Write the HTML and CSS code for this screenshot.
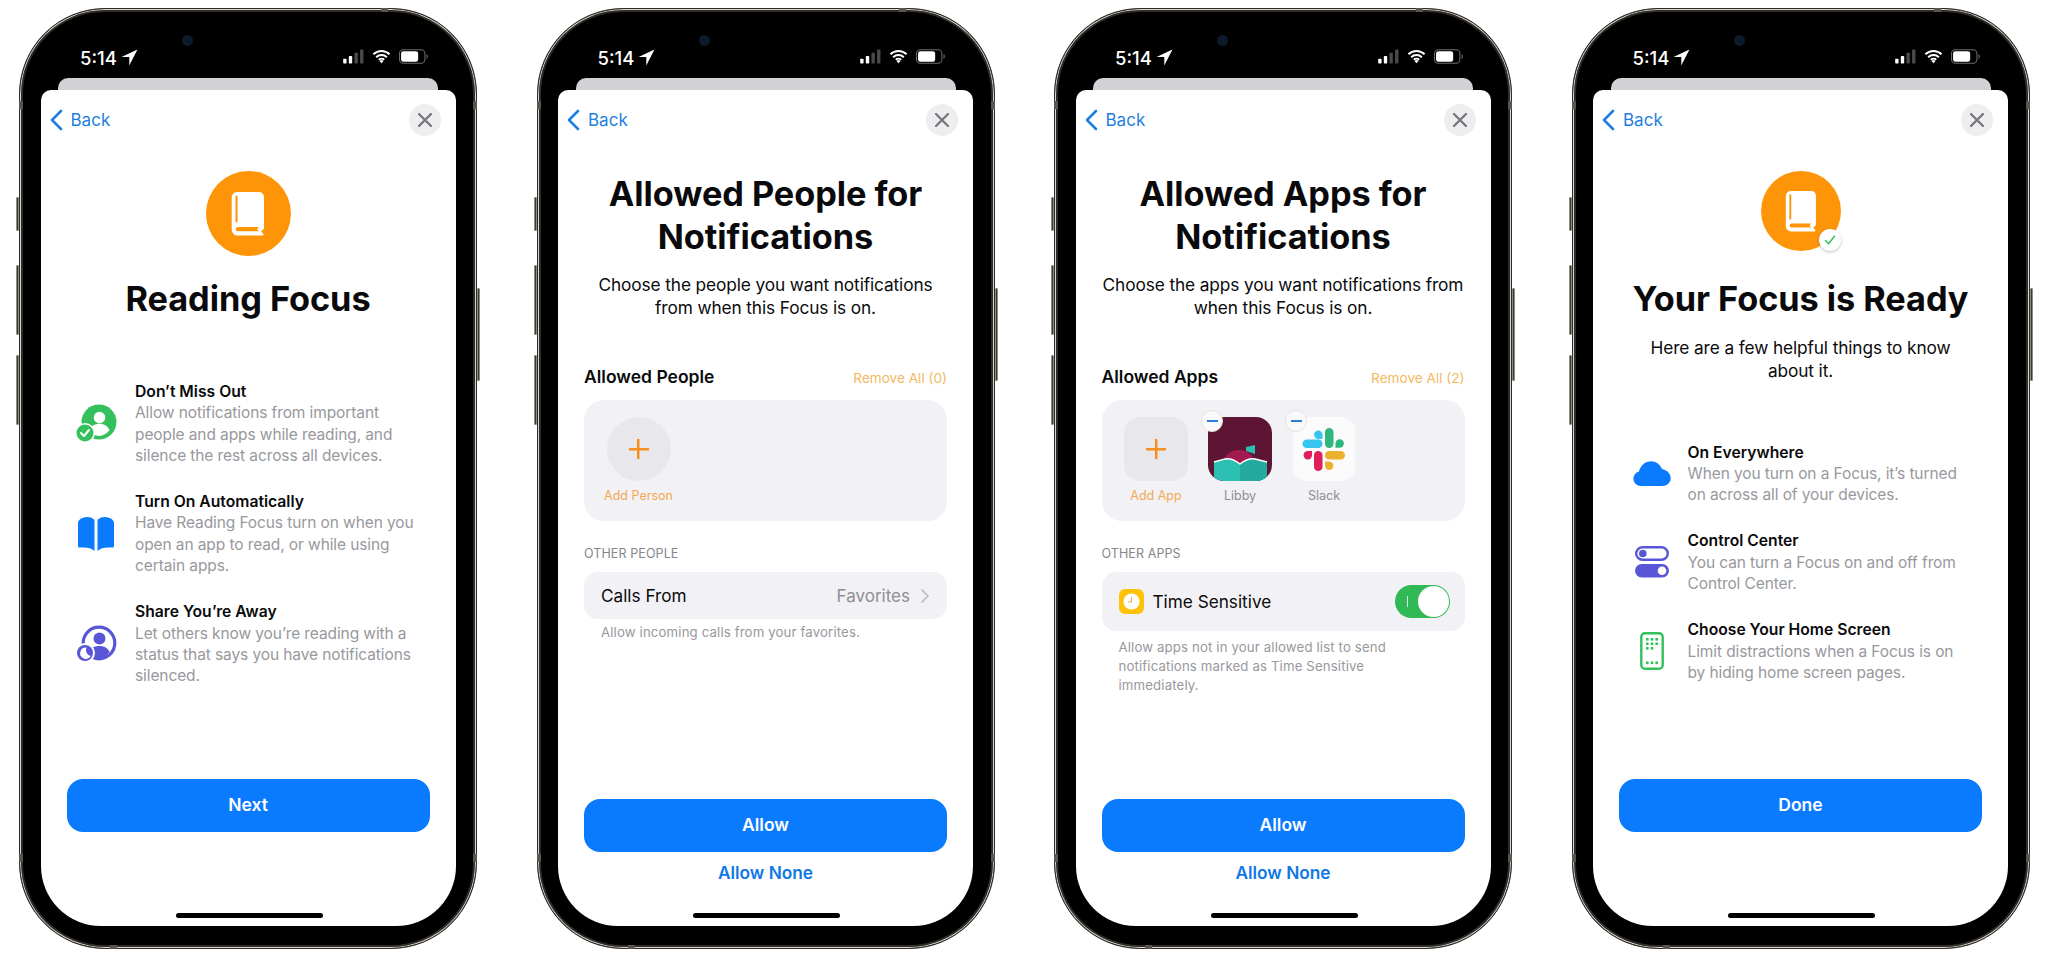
FILE: index.html
```html
<!DOCTYPE html>
<html lang="en">
<head>
<meta charset="utf-8">
<title>Focus setup</title>
<link rel="stylesheet" href="styles.css">
</head>
<body>
<svg class="sprites" width="0" height="0" aria-hidden="true">
  <symbol id="arrow" viewBox="0 0 16 16"><path d="M15.500.5.500 7.500h7.300v8z" fill="#fff"/></symbol>
  <symbol id="signal" viewBox="0 0 22 16">
    <rect x="0" y="10.500" width="3.600" height="5" rx=".8" fill="#fff"/>
    <rect x="6" y="7.500" width="3.600" height="8" rx=".8" fill="#fff"/>
    <rect x="12" y="4" width="3.600" height="11.500" rx=".8" fill="#4a4a4a"/>
    <rect x="18" y="0.500" width="3.600" height="15" rx=".8" fill="#4a4a4a"/>
  </symbol>
  <symbol id="wifi" viewBox="0 0 20 15">
    <path d="M1.500 5.200a12.200 12.200 0 0 1 17 0M4.400 8.200a8 8 0 0 1 11.200 0M7.200 11a4 4 0 0 1 5.600 0" fill="none" stroke="#fff" stroke-width="2.100"/>
    <path d="M10 14.600 7.900 12.300a3 3 0 0 1 4.200 0z" fill="#fff"/>
  </symbol>
  <symbol id="battery" viewBox="0 0 28 14">
    <rect x=".5" y=".5" width="24.500" height="13" rx="3.600" fill="none" stroke="#6b6b6b"/>
    <rect x="2" y="2" width="16.500" height="10" rx="2.200" fill="#fff"/>
    <path d="M26.600 4.700c.9.4 1.200 1.300 1.200 2.300s-.3 1.900-1.200 2.300z" fill="#6b6b6b"/>
  </symbol>
  <symbol id="back" viewBox="0 0 14 22"><path d="M12 2 3 11l9 9" fill="none" stroke="#1f7fe0" stroke-width="2.600" stroke-linecap="round" stroke-linejoin="round"/></symbol>
  <symbol id="close" viewBox="0 0 14 14"><path d="M1 1l12 12M13 1 1 13" fill="none" stroke="#77777b" stroke-width="2.300" stroke-linecap="round"/></symbol>
  <symbol id="book" viewBox="0 0 34 44">
    <path d="M6 0h22a5 5 0 0 1 5 5v30.500a3 3 0 0 1-1 2.200l-2 1.800 2.200 2.200c.6.6.2 1.800-.7 1.800H6.500A5.800 5.800 0 0 1 .7 38V5.300A5.300 5.300 0 0 1 6 0z" fill="#fff"/>
    <rect x="4.500" y="3.500" width="2" height="27" rx="1" fill="#fe9509"/>
    <path d="M6.500 35H28l-1.400 1.500c-.3.4-.3 1 0 1.400l1.200 1.400H6.500a2.200 2.200 0 0 1 0-4.300z" fill="#fe9509"/>
  </symbol>
  <symbol id="i-person-check" viewBox="0 0 44 44">
    <circle cx="25" cy="20" r="17.500" fill="#34c05c"/>
    <circle cx="25.500" cy="15.500" r="5.800" fill="#fff"/>
    <path d="M15 29c1.500-5 6-7.200 10.500-7.200s8.500 2.200 10 6.500c-2.600 3.500-6.300 5.600-10.500 5.600-3.700 0-7.300-1.800-10-4.900z" fill="#fff"/>
    <circle cx="11" cy="31" r="10" fill="#fff"/>
    <circle cx="11" cy="31" r="8.500" fill="#34c05c"/>
    <path d="M7 31l3 3 5-6" fill="none" stroke="#fff" stroke-width="2" stroke-linecap="round" stroke-linejoin="round"/>
  </symbol>
  <symbol id="i-open-book" viewBox="0 0 44 36">
    <path d="M8.500 2C13 0 18 1 20.500 4v31c-3-3-8-4-14-3.400-1.800.3-2.500-.5-2.500-2V7c0-2.400 2-4 4.500-5z" fill="#0a7aff"/>
    <path d="M35.500 2C31 0 26 1 23.500 4v31c3-3 8-4 14-3.400 1.800.3 2.500-.5 2.500-2V7c0-2.400-2-4-4.500-5z" fill="#0a7aff"/>
  </symbol>
  <symbol id="i-share" viewBox="0 0 44 44">
    <circle cx="25" cy="21" r="15.800" fill="none" stroke="#5856d6" stroke-width="3.200"/>
    <circle cx="25.500" cy="16.500" r="6" fill="#5856d6"/>
    <path d="M14 32c1.500-5.500 6-8 11.500-8 4.500 0 8.500 2 10 6-2.600 3.800-6.300 6-10.500 6-4 0-8-1.500-11-4z" fill="#5856d6"/>
    <circle cx="11" cy="31" r="10" fill="#fff"/>
    <circle cx="11" cy="31" r="8" fill="#5856d6"/>
    <path d="M12.500 25.500a5.700 5.700 0 1 0 4.300 8.500 6 6 0 0 1-4.300-8.500z" fill="#fff"/>
  </symbol>
  <symbol id="i-cloud" viewBox="0 0 38 25">
    <path d="M7.500 25A7.300 7.300 0 0 1 6 10.600C7.600 4.300 12.500.3 18 .3c5 0 9 3 11 7.700 4.800.8 8.700 4.800 8.700 9 0 4.600-3.700 8-8.500 8z" fill="#0a7aff"/>
  </symbol>
  <symbol id="i-switch" viewBox="0 0 34 32">
    <rect x="1.200" y="1.200" width="31.600" height="12.600" rx="6.300" fill="none" stroke="#5856d6" stroke-width="2.400"/>
    <circle cx="7.800" cy="7.500" r="3.800" fill="#5856d6"/>
    <rect x="0" y="18" width="34" height="13.500" rx="6.700" fill="#5856d6"/>
    <circle cx="27" cy="24.700" r="4.300" fill="#fff"/>
  </symbol>
  <symbol id="i-phone" viewBox="0 0 24 38">
    <rect x="1.300" y="1.300" width="21.400" height="35.400" rx="3.500" fill="none" stroke="#34c05c" stroke-width="2.400"/>
    <g fill="#34c05c">
      <rect x="6" y="6" width="2.600" height="2.600"/><rect x="10.700" y="6" width="2.600" height="2.600"/><rect x="15.400" y="6" width="2.600" height="2.600"/>
      <rect x="6" y="10.500" width="2.600" height="2.600"/><rect x="10.700" y="10.500" width="2.600" height="2.600"/><rect x="15.400" y="10.500" width="2.600" height="2.600"/>
      <rect x="6" y="15" width="2.600" height="2.600"/><rect x="10.700" y="15" width="2.600" height="2.600"/>
      <rect x="6" y="29.500" width="2.600" height="2.600"/><rect x="10.700" y="29.500" width="2.600" height="2.600"/><rect x="15.400" y="29.500" width="2.600" height="2.600"/>
    </g>
  </symbol>
</svg>

<main class="stage">

  <!-- Phone 1 -->
  <section class="phone">
    <i class="side side-mute"></i><i class="side side-up"></i><i class="side side-down"></i><i class="side side-power"></i>
    <div class="screen">
      <i class="speaker"></i><i class="camera"></i>
      <header class="status">
        <span class="time">5:14</span><svg class="s-arrow"><use href="#arrow"/></svg>
        <span class="status-right"><svg class="s-signal"><use href="#signal"/></svg><svg class="s-wifi"><use href="#wifi"/></svg><svg class="s-battery"><use href="#battery"/></svg></span>
      </header>
      <div class="sheet-back"></div>
      <div class="card">
        <nav class="nav"><a class="back"><svg class="back-icon"><use href="#back"/></svg>Back</a><span class="close"><svg class="close-icon"><use href="#close"/></svg></span></nav>
        <div class="hero"><svg class="hero-book"><use href="#book"/></svg></div>
        <h1 class="title title-hero">Reading Focus</h1>
        <ul class="features features-first">
          <li class="feature"><svg class="f-icon"><use href="#i-person-check"/></svg><div><h3>Don’t Miss Out</h3><p>Allow notifications from important people and apps while reading, and silence the rest across all devices.</p></div></li>
          <li class="feature"><svg class="f-icon f-icon-book"><use href="#i-open-book"/></svg><div><h3>Turn On Automatically</h3><p>Have Reading Focus turn on when you open an app to read, or while using certain apps.</p></div></li>
          <li class="feature"><svg class="f-icon"><use href="#i-share"/></svg><div><h3>Share You’re Away</h3><p>Let others know you’re reading with a status that says you have notifications silenced.</p></div></li>
        </ul>
        <footer class="foot foot-single"><button class="primary">Next</button></footer>
      </div>
      <i class="home"></i>
    </div>
  </section>

  <!-- Phone 2 -->
  <section class="phone">
    <i class="side side-mute"></i><i class="side side-up"></i><i class="side side-down"></i><i class="side side-power"></i>
    <div class="screen">
      <i class="speaker"></i><i class="camera"></i>
      <header class="status">
        <span class="time">5:14</span><svg class="s-arrow"><use href="#arrow"/></svg>
        <span class="status-right"><svg class="s-signal"><use href="#signal"/></svg><svg class="s-wifi"><use href="#wifi"/></svg><svg class="s-battery"><use href="#battery"/></svg></span>
      </header>
      <div class="sheet-back"></div>
      <div class="card">
        <nav class="nav"><a class="back"><svg class="back-icon"><use href="#back"/></svg>Back</a><span class="close"><svg class="close-icon"><use href="#close"/></svg></span></nav>
        <h1 class="title title-top">Allowed People for Notifications</h1>
        <p class="lead lead-top">Choose the people you want notifications from when this Focus is on.</p>
        <div class="sec-head"><h2>Allowed People</h2><span class="remove">Remove All (0)</span></div>
        <div class="panel">
          <div class="tile-item"><span class="tile tile-round"><i class="plus"></i></span><span class="tile-label tile-label-add">Add Person</span></div>
        </div>
        <h4 class="caption">OTHER PEOPLE</h4>
        <div class="row row-calls"><span class="row-name">Calls From</span><span class="row-val">Favorites</span><svg class="row-chev" viewBox="0 0 10 16"><path d="M2 2l6 6-6 6" fill="none" stroke="#c4c4c8" stroke-width="1.800" stroke-linecap="round" stroke-linejoin="round"/></svg></div>
        <p class="note note-calls">Allow incoming calls from your favorites.</p>
        <footer class="foot foot-double"><button class="primary">Allow</button><a class="secondary">Allow None</a></footer>
      </div>
      <i class="home"></i>
    </div>
  </section>

  <!-- Phone 3 -->
  <section class="phone">
    <i class="side side-mute"></i><i class="side side-up"></i><i class="side side-down"></i><i class="side side-power"></i>
    <div class="screen">
      <i class="speaker"></i><i class="camera"></i>
      <header class="status">
        <span class="time">5:14</span><svg class="s-arrow"><use href="#arrow"/></svg>
        <span class="status-right"><svg class="s-signal"><use href="#signal"/></svg><svg class="s-wifi"><use href="#wifi"/></svg><svg class="s-battery"><use href="#battery"/></svg></span>
      </header>
      <div class="sheet-back"></div>
      <div class="card">
        <nav class="nav"><a class="back"><svg class="back-icon"><use href="#back"/></svg>Back</a><span class="close"><svg class="close-icon"><use href="#close"/></svg></span></nav>
        <h1 class="title title-top">Allowed Apps for Notifications</h1>
        <p class="lead lead-top">Choose the apps you want notifications from when this Focus is on.</p>
        <div class="sec-head"><h2>Allowed Apps</h2><span class="remove">Remove All (2)</span></div>
        <div class="panel">
          <div class="tile-item"><span class="tile tile-square"><i class="plus"></i></span><span class="tile-label tile-label-add">Add App</span></div>
          <div class="tile-item">
            <span class="tile tile-app">
              <svg class="app-art" viewBox="0 0 64 64">
                <rect width="64" height="64" fill="#5e1534"/>
                <path d="M15 48c0-9 7-15 16-15s16 6 16 15z" fill="#a31a50"/>
                <path d="M38 30l9-2v9l-9-3z" fill="#2fbfb2"/>
                <path d="M6 45 17 42c5-1 11 2 15 5 4-3 10-6 15-5l12 3v19H6z" fill="#2cc0b3"/>
                <path d="M32 47.500V64h27V45l-12-3c-5-1-11 2-15 5z" fill="#23a99e"/>
                <path d="M6 45 17 42c5-1 11 2 15 5 4-3 10-6 15-5l12 3" fill="none" stroke="#fff" stroke-width="1.500"/>
              </svg>
            </span>
            <i class="minus"></i>
            <span class="tile-label">Libby</span>
          </div>
          <div class="tile-item">
            <span class="tile tile-app tile-slack">
              <svg class="app-art" viewBox="0 0 62 64">
                <rect width="62" height="64" fill="#fbfbfc"/>
                <rect x="9.500" y="22.500" width="20" height="8.500" rx="4.250" fill="#36c5f0"/>
                <path d="M25.500 22.500a4.200 4.200 0 1 1 4.200-4.200v4.200z" fill="#36c5f0" transform="translate(-.2 -.5)"/>
                <rect x="32" y="11" width="8.500" height="20" rx="4.250" fill="#2eb67d"/>
                <path d="M42.500 26.500a4.200 4.200 0 1 1 4.200 4.200h-4.200z" fill="#2eb67d"/>
                <rect x="32" y="34" width="20" height="8.500" rx="4.250" fill="#ecb22e"/>
                <path d="M36.200 44.500a4.200 4.200 0 1 1-4.200 4.200v-4.200z" fill="#ecb22e"/>
                <rect x="21" y="34" width="8.500" height="20" rx="4.250" fill="#e01e5a"/>
                <path d="M19 38.200a4.200 4.200 0 1 1-4.200-4.200h4.200z" fill="#e01e5a"/>
              </svg>
            </span>
            <i class="minus"></i>
            <span class="tile-label">Slack</span>
          </div>
        </div>
        <h4 class="caption">OTHER APPS</h4>
        <div class="row row-time">
          <span class="ts-icon"><svg viewBox="0 0 18 18"><circle cx="9" cy="9" r="8.500" fill="#fff"/><path d="M9 4.500V9.500H5.500" fill="none" stroke="#e8b010" stroke-width="1"/></svg></span>
          <span class="row-name">Time Sensitive</span>
          <span class="toggle"><i class="toggle-tick"></i><i class="knob"></i></span>
        </div>
        <p class="note note-time">Allow apps not in your allowed list to send notifications marked as Time Sensitive immediately.</p>
        <footer class="foot foot-double"><button class="primary">Allow</button><a class="secondary">Allow None</a></footer>
      </div>
      <i class="home"></i>
    </div>
  </section>

  <!-- Phone 4 -->
  <section class="phone">
    <i class="side side-mute"></i><i class="side side-up"></i><i class="side side-down"></i><i class="side side-power"></i>
    <div class="screen">
      <i class="speaker"></i><i class="camera"></i>
      <header class="status">
        <span class="time">5:14</span><svg class="s-arrow"><use href="#arrow"/></svg>
        <span class="status-right"><svg class="s-signal"><use href="#signal"/></svg><svg class="s-wifi"><use href="#wifi"/></svg><svg class="s-battery"><use href="#battery"/></svg></span>
      </header>
      <div class="sheet-back"></div>
      <div class="card">
        <nav class="nav"><a class="back"><svg class="back-icon"><use href="#back"/></svg>Back</a><span class="close"><svg class="close-icon"><use href="#close"/></svg></span></nav>
        <div class="hero hero-small"><svg class="hero-book"><use href="#book"/></svg>
          <span class="check"><svg viewBox="0 0 12 12"><path d="M1.500 6.500l3 3.200 6-7.500" fill="none" stroke="#34c05c" stroke-width="1.500" stroke-linecap="round" stroke-linejoin="round"/></svg></span>
        </div>
        <h1 class="title title-ready">Your Focus is Ready</h1>
        <p class="lead lead-ready">Here are a few helpful things to know about it.</p>
        <ul class="features features-ready">
          <li class="feature"><svg class="f-icon f-icon-cloud"><use href="#i-cloud"/></svg><div><h3>On Everywhere</h3><p>When you turn on a Focus, it’s turned on across all of your devices.</p></div></li>
          <li class="feature"><svg class="f-icon f-icon-switch"><use href="#i-switch"/></svg><div><h3>Control Center</h3><p>You can turn a Focus on and off from Control Center.</p></div></li>
          <li class="feature"><svg class="f-icon f-icon-phone"><use href="#i-phone"/></svg><div><h3>Choose Your Home Screen</h3><p>Limit distractions when a Focus is on by hiding home screen pages.</p></div></li>
        </ul>
        <footer class="foot foot-single"><button class="primary">Done</button></footer>
      </div>
      <i class="home"></i>
    </div>
  </section>

</main>
</body>
</html>
```

FILE: styles.css
```css
* { box-sizing: border-box; }
html, body { margin: 0; padding: 0; background: #fff; }
body { width: 2048px; height: 957px; overflow: hidden; font-family: Inter, "Liberation Sans", sans-serif; color: #0a0a0c; }
.sprites { position: absolute; }
h1, h2, h3, h4, p, ul { margin: 0; padding: 0; }
ul { list-style: none; }
i { display: block; }

.stage { display: flex; gap: 59.500px; padding: 8px 0 0 19px; }

.phone {
  position: relative; flex: none; width: 458px; height: 941px;
  padding: 20px 20.500px 22px;
  background: #000; border-radius: 86px; border: 1px solid #2f2c28;
  box-shadow: inset 0 0 0 1px #d8d4ce, inset 0 0 0 3px #2f2c28;
}
.phone::before {
  content: ""; position: absolute; inset: -1px; border-radius: 86px; pointer-events: none;
  background:
    linear-gradient(#5a5650, #5a5650) left 0 top 93px / 4px 8px no-repeat,
    linear-gradient(#5a5650, #5a5650) right 0 top 93px / 4px 8px no-repeat,
    linear-gradient(#5a5650, #5a5650) left 0 top 846px / 4px 8px no-repeat,
    linear-gradient(#5a5650, #5a5650) right 0 top 846px / 4px 8px no-repeat,
    linear-gradient(#5a5650, #5a5650) left 362px top 0 / 7px 4px no-repeat,
    linear-gradient(#5a5650, #5a5650) left 91px bottom 0 / 7px 4px no-repeat;
}
.side { position: absolute; background: #3d3a36; border: 1px solid #8d8a85; border-radius: 1px; }
.side-mute { left: -4px; top: 188px; width: 3px; height: 34px; }
.side-up { left: -4px; top: 256px; width: 3px; height: 70px; }
.side-down { left: -4px; top: 346px; width: 3px; height: 70px; }
.side-power { right: -4px; top: 279px; width: 3px; height: 93px; }

.screen {
  position: relative; height: 100%; display: flex; flex-direction: column;
  background: #000; border-radius: 60px; overflow: hidden;
}
.speaker { position: absolute; left: 170px; top: -15px; width: 76px; height: 8px; background: #1b1b1b; border-radius: 0 0 6px 6px; }
.camera { position: absolute; left: 141px; top: 6px; width: 11px; height: 11px; border-radius: 50%; background: #0d1a2c; }

.status { flex: none; height: 49px; display: flex; align-items: center; padding: 8px 28px 0 39.500px; color: #fff; }
.time { font-size: 18.500px; font-weight: 500; line-height: 22px; }
.s-arrow { width: 17px; height: 17px; margin-left: 4px; }
.status-right { margin-left: auto; margin-top: -2px; display: flex; align-items: center; gap: 8px; }
.s-signal { width: 21px; height: 15px; }
.s-wifi { width: 19px; height: 15px; }
.s-battery { width: 29px; height: 15px; }

.sheet-back { flex: none; height: 12px; margin: 0 17.500px; background: #d1d1d6; border-radius: 10px 10px 0 0; }

.card { flex: 1; min-height: 0; display: flex; flex-direction: column; background: #fff; border-radius: 10px 10px 0 0; }
.nav { flex: none; height: 46px; padding: 14px 15px 0 8px; display: flex; justify-content: space-between; align-items: center; }
.back { display: flex; align-items: center; gap: 8px; color: #1f7fe0; font-size: 17px; line-height: 22px; }
.back-icon { width: 14px; height: 22px; }
.close { width: 32px; height: 32px; border-radius: 50%; background: #eeeef0; display: flex; align-items: center; justify-content: center; }
.close-icon { width: 14px; height: 14px; }

.hero { position: relative; flex: none; width: 85px; height: 85px; margin: 35px auto 0; border-radius: 50%; background: #fe9509; display: flex; align-items: center; justify-content: center; }
.hero-book { width: 34px; height: 44px; }
.hero-small { width: 80px; height: 80px; }
.hero-small .hero-book { width: 32px; height: 41px; }
.check { position: absolute; right: 0; bottom: 0; width: 22px; height: 22px; border-radius: 50%; background: #fff; box-shadow: 0 1px 3px rgba(0,0,0,.25); display: flex; align-items: center; justify-content: center; }
.check svg { width: 12px; height: 12px; }

.title { font-size: 34.300px; font-weight: 700; line-height: 43px; text-align: center; letter-spacing: -.05px; }
.title-hero { margin-top: 21px; }
.title-ready { margin-top: 26px; }
.title-top { margin-top: 35.500px; padding: 0 40px; }
.lead { font-size: 17.300px; line-height: 23px; text-align: center; letter-spacing: -.12px; }
.lead-top { margin-top: 15.500px; padding: 0 20px; }
.lead-ready { margin-top: 15.500px; padding: 0 50px; }

.features { padding: 0 38px 0 33.500px; display: flex; flex-direction: column; gap: 25px; }
.features-first { margin-top: 61px; }
.features-ready { margin-top: 60px; }
.feature { display: flex; align-items: center; }
.feature h3 { font-size: 15.700px; font-weight: 600; line-height: 21.300px; }
.feature p { font-size: 15.500px; line-height: 21.300px; color: #98989d; letter-spacing: -.1px; }
.f-icon { flex: none; width: 44px; height: 44px; margin-right: 17px; }
.f-icon-book { height: 36px; }
.f-icon-cloud { width: 38px; height: 25px; margin: 0 17px 0 6px; }
.f-icon-switch { width: 34px; height: 32px; margin: 0 19px 0 8px; }
.f-icon-phone { width: 24px; height: 38px; margin: 0 24px 0 13px; }

.sec-head { flex: none; margin: 46px 26px 0; display: flex; justify-content: space-between; align-items: center; height: 24px; }
.sec-head h2 { font-size: 17.500px; font-weight: 600; line-height: 24px; }
.remove { padding-top: 2px; font-size: 13.600px; color: #f4b860; }

.panel { flex: none; height: 121px; margin: 11px 26px 0; padding: 17px 22.500px 0; background: #f2f2f6; border-radius: 20px; display: flex; gap: 20px; }
.tile-item { position: relative; width: 64px; display: flex; flex-direction: column; align-items: center; }
.tile { flex: none; width: 64px; height: 64px; display: flex; align-items: center; justify-content: center; background: #e8e8ec; }
.tile-round { border-radius: 50%; }
.tile-square { border-radius: 16px; }
.tile-app { border-radius: 16px; overflow: hidden; background: none; }
.app-art { display: block; width: 100%; height: 100%; }
.tile-label { margin-top: 7px; font-size: 12.500px; line-height: 16px; color: #8e8e93; white-space: nowrap; }
.tile-label-add { color: #f2a94e; }
.plus { position: relative; width: 20px; height: 20px; background:
  linear-gradient(#f5901e, #f5901e) center / 20px 2.500px no-repeat,
  linear-gradient(#f5901e, #f5901e) center / 2.500px 20px no-repeat; }
.minus { position: absolute; left: -7px; top: -7px; width: 22px; height: 22px; border-radius: 50%; border: 1px solid #e6e2dc; background:
  linear-gradient(#2a7fdc, #2a7fdc) center / 11px 2px no-repeat, #fafafb; }

.caption { flex: none; margin: 25px 26px 0; font-size: 12.500px; font-weight: 400; line-height: 16px; color: #85858a; letter-spacing: .1px; }
.row { flex: none; margin: 10px 26px 0; padding: 0 17px; background: #f2f2f6; border-radius: 14px; display: flex; align-items: center; }
.row-calls { height: 47px; }
.row-time { height: 59px; }
.row-name { font-size: 17.200px; line-height: 24px; }
.row-val { margin-left: auto; font-size: 17px; color: #8e8e93; }
.row-chev { width: 10px; height: 16px; margin-left: 10px; }
.ts-icon { width: 25px; height: 25px; margin-right: 9px; border-radius: 6px; background: #ffc20a; display: flex; align-items: center; justify-content: center; }
.ts-icon svg { width: 17px; height: 17px; }
.toggle { position: relative; margin-left: auto; margin-right: -2px; width: 55px; height: 33px; padding: 1px; border-radius: 17px; background: #30b955; display: flex; justify-content: flex-end; align-items: center; }
.toggle-tick { position: absolute; left: 12px; top: 11px; width: 1px; height: 11px; background: #d6f3de; }
.knob { width: 31px; height: 31px; border-radius: 50%; background: #fff; }
.note { flex: none; margin: 0 26px; padding: 0 17px; font-size: 13.200px; line-height: 19px; color: #98989d; letter-spacing: .15px; }
.note-calls { margin-top: 3.500px; }
.note-time { margin-top: 7px; padding-right: 40px; }

.foot { margin-top: auto; padding: 0 26px; display: flex; flex-direction: column; align-items: center; }
.foot-single { padding-bottom: 94.500px; }
.foot-double { padding-bottom: 41px; }
.primary { width: 100%; height: 53px; border: 0; border-radius: 16px; background: #0a7aff; color: #fff; font: 600 17.500px/24px Inter, "Liberation Sans", sans-serif; }
.secondary { margin-top: 9.500px; font-size: 17.300px; font-weight: 600; line-height: 23px; color: #0f78e6; }
.foot-double .primary { margin-top: 0; }
.foot-double { padding-bottom: 42px; }

.home { position: absolute; left: 135px; bottom: 8px; width: 147px; height: 5px; border-radius: 3px; background: #000; }
```
